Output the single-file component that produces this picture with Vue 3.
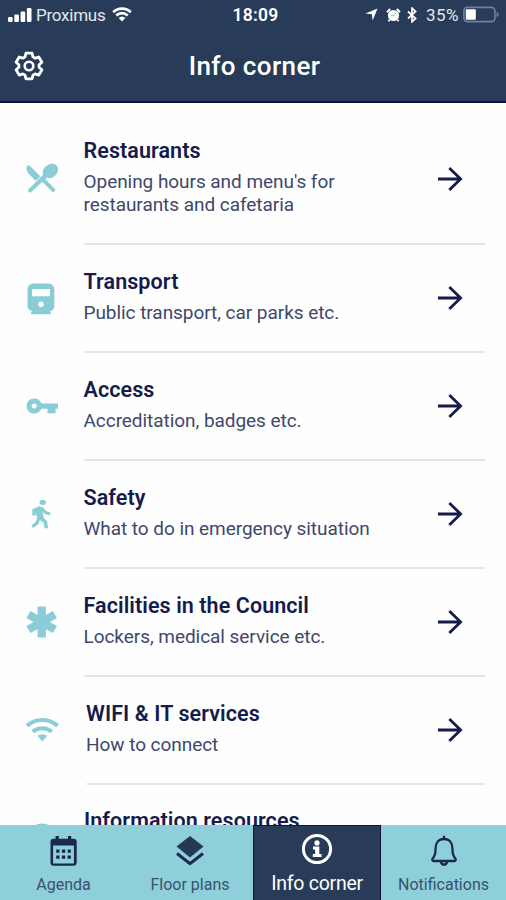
<script setup>
const items = [
  { icon: 'food', title: 'Restaurants', lines: ["Opening hours and menu's for", 'restaurants and cafetaria'] },
  { icon: 'train', title: 'Transport', lines: ['Public transport, car parks etc.'] },
  { icon: 'key', title: 'Access', lines: ['Accreditation, badges etc.'] },
  { icon: 'walk', title: 'Safety', lines: ['What to do in emergency situation'] },
  { icon: 'star', title: 'Facilities in the Council', lines: ['Lockers, medical service etc.'] },
  { icon: 'wifi', title: 'WIFI & IT services', lines: ['How to connect'] },
  { icon: 'info', title: 'Information resources', lines: [] },
]
const tabs = ['Agenda', 'Floor plans', 'Info corner', 'Notifications']
</script>

<template>
  <div class="screen">
    <header class="header">
      <div class="status">
        <div class="status-left">
          <svg class="signal" viewBox="0 0 24 14">
            <rect x="0" y="9" width="4.6" height="5" rx="1.2" />
            <rect x="6.3" y="6.5" width="4.6" height="7.5" rx="1.2" />
            <rect x="12.6" y="3.5" width="4.6" height="10.5" rx="1.2" />
            <rect x="18.9" y="0" width="4.6" height="14" rx="1.2" />
          </svg>
          <span class="carrier">Proximus</span>
          <svg class="status-wifi" viewBox="0 0 20 15">
            <path d="M1.2 5.2a12.6 12.6 0 0 1 17.6 0M4.3 8.5a8.2 8.2 0 0 1 11.4 0" fill="none" stroke="#fff" stroke-width="2.7" />
            <path d="M6.6 11a5 5 0 0 1 6.8 0L10 14.6z" fill="#fff" />
          </svg>
        </div>
        <span class="clock">18:09</span>
        <div class="status-right">
          <svg class="locate" viewBox="0 0 14 14"><path d="M13.5.5 8.2 13.5 7.4 6.8.5 6z" /></svg>
          <svg class="alarm" viewBox="0 0 15 14">
            <circle cx="7.5" cy="7.5" r="5.6" />
            <path d="M1 4.2 4.2 1M14 4.2 10.8 1M3.6 11.8 2.4 13.2M11.4 11.8l1.2 1.4" stroke="#fff" stroke-width="2" />
            <path d="M10 4.6 7.5 7.7H5" fill="none" stroke="#a3adba" stroke-width="1" />
          </svg>
          <svg class="bluetooth" viewBox="0 0 10 16"><path d="m1 4.5 7.6 7L5 14.8V1.2l3.6 3.3L1 11.5" fill="none" stroke="#fff" stroke-width="1.7" /></svg>
          <span class="percent">35%</span>
          <svg class="battery" viewBox="0 0 36 16">
            <rect x=".9" y=".9" width="31" height="14.2" rx="3.5" fill="none" stroke="#71809a" stroke-width="1.6" />
            <rect x="2.8" y="2.8" width="10" height="10.4" rx="1" fill="#fff" />
            <path d="M33.6 5.2q2 .8 2 2.8t-2 2.8z" fill="#71809a" />
          </svg>
        </div>
      </div>
      <div class="titlebar">
        <svg class="gear" viewBox="0 0 30 30" fill="none" stroke="#fff" stroke-linejoin="round">
          <path stroke-width="2.8" d="M11.9 2.2h6.2l.8 3.7 2.3 1.3 3.6-1.2 3.1 5.3-2.8 2.5v2.500l2.800 2.500-3.100 5.300-3.600-1.200-2.300 1.300-.8 3.600h-6.200l-.8-3.600-2.300-1.300-3.600 1.200-3.100-5.300 2.800-2.500v-2.500l-2.800-2.500 3.100-5.300 3.600 1.200 2.300-1.300z" />
          <circle cx="15" cy="15" r="4.3" stroke-width="2.6" />
        </svg>
        <h1>Info corner</h1>
      </div>
    </header>

    <main class="list">
      <div v-for="item in items" :key="item.icon" class="row">
        <div class="icon">
          <svg v-if="item.icon === 'food'" viewBox="0 0 32 32">
            <path d="M1.4 2.5Q2.4 1.6 4 3L14.300 13.300 9.700 17.800 2.800 10.900Q-.9 6.500 1.400 2.500z" />
            <path d="M15.700 18.300 18.700 15.300 29 26.200Q29.200 28.800 26.600 29z" />
            <path d="M2.100 26.700 17.200 11.500C15.900 8.500 17.500 5.300 20.300 3.100 24-.1 28.500.3 30.600 2.400s1.900 6.400-.8 9.700c-2.600 3-6 3.900-8.800 2.500L5 29.300Q1.600 30 2.100 26.700z" />
          </svg>
          <svg v-else-if="item.icon === 'train'" viewBox="0 0 32 32">
            <path fill-rule="evenodd" d="M8 .5h14q6.300 0 6.300 6v16q0 5.300-4.500 5.600l1 1.200v2H5.200v-2l1.300-1.200Q1.500 27.400 1.500 22.500v-16Q1.500.5 8 .5zM6 6v7.300h18V6zM15 18.600a2.800 2.800 0 1 0 .01 0z" />
          </svg>
          <svg v-else-if="item.icon === 'key'" viewBox="0 0 32 32">
            <path fill-rule="evenodd" d="M8.200 8.500c3.400 0 6 1.900 7.200 5h17v5.200h-2.900v4.600h-8v-4.600h-6.100c-1.200 3-3.800 4.900-7.200 4.900A7.500 7.500 0 0 1 .5 16 7.500 7.500 0 0 1 8.200 8.500zm0 5.100a2.500 2.500 0 1 0 .01 0z" />
          </svg>
          <svg v-else-if="item.icon === 'walk'" viewBox="0 0 32 32" fill="none" stroke="#8acdd7">
            <ellipse cx="16.7" cy="4.3" rx="3.2" ry="2.6" fill="#8acdd7" stroke="none" />
            <path d="M14.700 9.500 12.400 19.200 9.900 16.600 12 9z" fill="#8acdd7" stroke-width="1" />
            <path d="M14.200 9.700 7.800 12.200v5.300" stroke-width="3" />
            <path d="M15.300 9 12.800 19.400 19.300 23.500 20.300 30.300" stroke-width="3.600" />
            <path d="M12.800 19.300 11.200 25 6.300 28.800" stroke-width="3.200" />
            <path d="m16 10.300 3.100 4.200 5.200 1.400" stroke-width="3" />
          </svg>
          <svg v-else-if="item.icon === 'star'" viewBox="0 0 32 32" fill="none" stroke="#8acdd7">
            <path d="M15.700.5v31M2.500 8.500l26.400 15M28.900 8.500l-26.400 15" stroke-width="8.300" />
          </svg>
          <svg v-else-if="item.icon === 'wifi'" class="wide" viewBox="0 0 34 32">
            <path d="M2 11.700C10.800 4 23.800 4 32.600 11.700M7.800 17.700c5.500-4.700 13.500-4.700 19 0" fill="none" stroke="#8acdd7" stroke-width="4" />
            <path d="M12.400 21.800q4.900-3.200 9.800 0L17.300 27.500z" />
          </svg>
          <svg v-else viewBox="0 0 32 32"><circle cx="16" cy="16.500" r="15" /></svg>
        </div>
        <div :class="['body', item.icon]">
          <div class="text">
            <h2>{{ item.title }}</h2>
            <p v-for="line in item.lines" :key="line">{{ line }}</p>
          </div>
          <svg v-if="item.lines.length" class="arrow" viewBox="0 0 28 28"><path d="M2 14h23M13.300 3 24.600 14l-11.300 11" /></svg>
        </div>
      </div>
    </main>

    <nav class="tabs">
      <div v-for="(tab, i) in tabs" :key="tab" :class="['tab', { active: i === 2 }]">
        <svg v-if="i === 0" viewBox="0 0 32 32">
          <path d="M9.200 1v6M21.600 1v6" stroke="#17234d" stroke-width="3.200" />
          <path fill="#1b2850" fill-rule="evenodd" d="M5.500 3.800h20.200q3 0 3 3v21q0 3-3 3H5.500q-3 0-3-3v-21q0-3 3-3zM5.100 10.500v17.900h20.800V10.500z" />
          <path d="M8.200 16.200h14.700M8.200 22.200h14.700" stroke="#17234d" stroke-width="3.200" stroke-dasharray="3.300 2.400" />
        </svg>
        <svg v-else-if="i === 1" viewBox="0 0 32 32">
          <path d="M16 1 29.500 11.600 16 22.500 2.500 11.600z" fill="#253957" />
          <path d="m3 18.500 13 10.200 13-10.200" fill="none" stroke="#1a294f" stroke-width="3" />
        </svg>
        <svg v-else-if="i === 2" viewBox="0 0 32 32">
          <circle cx="16" cy="16" r="13.600" fill="none" stroke="#fff" stroke-width="3" />
          <circle cx="16" cy="9.900" r="2.600" fill="#fff" />
          <path d="M12 13.500h6.300v7.400h2.200v3.100h-8.700v-3.100h2.300v-4.300H12z" fill="#fff" />
        </svg>
        <svg v-else viewBox="0 0 32 32" fill="none" stroke="#1a2850" stroke-width="2.300">
          <path d="M16 4c5.600 0 8.400 4 8.400 9.200 0 6.800 1.200 8.500 2.900 10.400.8.9.3 2.400-1 2.400H5.700c-1.300 0-1.800-1.500-1-2.400 1.700-1.900 2.900-3.600 2.900-10.400C7.600 8 10.400 4 16 4zM12.800 26.500c.6 4.200 5.800 4.200 6.400 0M16 .8V4" />
        </svg>
        <span>{{ tab }}</span>
      </div>
    </nav>
  </div>
</template>

<style>
body {
  margin: 0;
  background: #fefefe;
}
</style>

<style scoped>
* {
  box-sizing: border-box;
}
.screen {
  display: flex;
  flex-direction: column;
  width: 506px;
  height: 900px;
  overflow: hidden;
  background: #fefefe;
  font-family: Roboto, 'Liberation Sans', sans-serif;
}
svg {
  display: block;
  flex: none;
}
h1,
h2,
p {
  margin: 0;
  white-space: nowrap;
}
.header {
  flex: none;
  height: 103px;
  background: #283c5a;
  border-bottom: 2px solid #0e1543;
  color: #fff;
}
.status {
  display: grid;
  grid-template-columns: 1fr auto 1fr;
  align-items: center;
  height: 29px;
  padding: 0 7px 0 8px;
}
.status-left,
.status-right {
  display: flex;
  align-items: center;
}
.status-right {
  justify-content: flex-end;
}
.signal {
  width: 24px;
  height: 14px;
  fill: #fff;
}
.carrier {
  margin-left: 4px;
  font-size: 17px;
  letter-spacing: -0.25px;
  color: #e4e8ee;
}
.status-wifi {
  width: 20px;
  height: 15px;
  margin-left: 7px;
}
.clock {
  padding-left: 4px;
  font-size: 17.5px;
  font-weight: 600;
  letter-spacing: 0.2px;
}
.locate {
  width: 13px;
  height: 13px;
  fill: #fff;
}
.alarm {
  width: 15px;
  height: 14px;
  margin-left: 8px;
  fill: #fff;
}
.bluetooth {
  width: 10px;
  height: 16px;
  margin-left: 6px;
}
.percent {
  margin-left: 9px;
  font-size: 17px;
  letter-spacing: 0.5px;
  color: #e4e8ee;
}
.battery {
  width: 36px;
  height: 17px;
  margin-left: 4px;
}
.titlebar {
  display: grid;
  grid-template-columns: 30px 1fr 28px;
  align-items: center;
  height: 74px;
  padding: 0 13px 0 14px;
}
.gear {
  width: 30px;
  height: 30px;
}
.titlebar h1 {
  text-align: center;
  font-size: 26px;
  font-weight: 500;
  line-height: 30px;
  letter-spacing: 0.4px;
}
.list {
  flex: 1;
  min-height: 0;
  overflow: hidden;
  padding: 11.2px 21px 0 26px;
}
.row {
  display: flex;
  gap: 26px;
  min-height: 107.9px;
}
.icon {
  display: flex;
  align-items: center;
  justify-content: center;
  flex: none;
  width: 32px;
  padding-bottom: 1px;
}
.icon svg {
  width: 32px;
  height: 32px;
  fill: #8acdd7;
}
.icon .wide {
  width: 34px;
}
.body {
  display: flex;
  align-items: center;
  justify-content: space-between;
  flex: 1;
  padding: 21.9px 21px 27px 0;
  border-bottom: 2px solid #e5e5e7;
}
.body.wifi {
  margin-left: 2.5px;
}
.body.info {
  margin-left: 0.5px;
}
.text {
  align-self: flex-start;
  margin-left: -0.5px;
}
.text h2 {
  margin-bottom: 4px;
  font-size: 21.5px;
  font-weight: 600;
  line-height: 30px;
  letter-spacing: 0.08px;
  color: #151c4c;
}
.text p {
  font-size: 19px;
  line-height: 23px;
  letter-spacing: -0.05px;
  color: #3e486b;
}
.arrow {
  width: 28px;
  height: 28px;
  margin-top: 5px;
  fill: none;
  stroke: #141d4a;
  stroke-width: 2.8;
}
.tabs {
  display: grid;
  grid-template-columns: 127px 126px 128px 125px;
  flex: none;
  height: 75px;
  background: #8ecfd9;
}
.tab {
  display: flex;
  flex-direction: column;
  align-items: center;
  padding-top: 10px;
  color: #38526f;
}
.tab svg {
  width: 32px;
  height: 32px;
}
.tab span {
  margin-top: 8px;
  font-size: 16px;
  line-height: 20px;
  white-space: nowrap;
}
.active {
  padding-top: 7px;
  background: #283c5a;
  border: 1px solid #0e1543;
  border-bottom: 0;
  color: #fff;
}
.active span {
  margin-top: 9px;
  font-size: 19.5px;
  letter-spacing: -0.25px;
}
</style>
